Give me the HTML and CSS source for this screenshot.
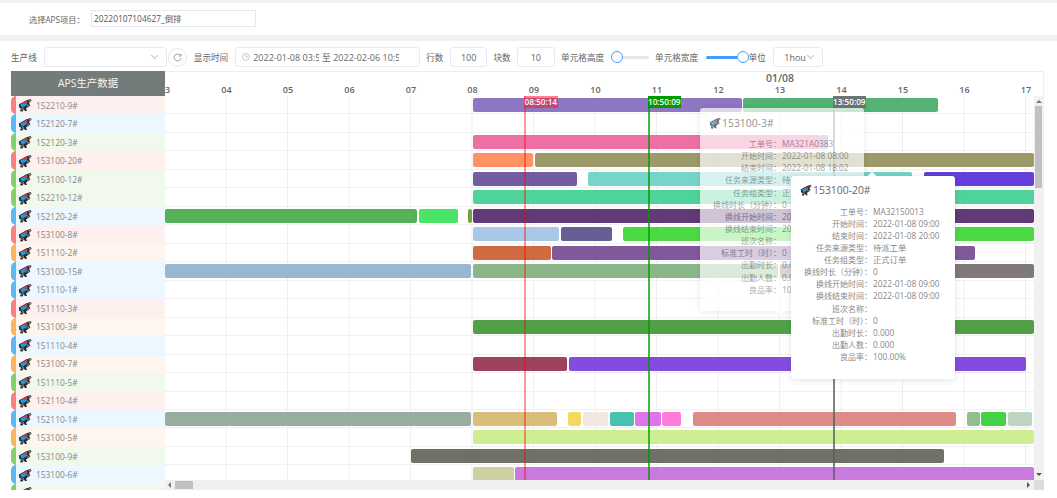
FILE: index.html
```html
<!DOCTYPE html>
<html lang="en">

<head>
  <meta charset="UTF-8">
  <meta name="viewport" content="width=device-width, initial-scale=1.0">
  <title>APS生产数据</title>
  <link rel="stylesheet" href="styles.css">
</head>

<body>

  <svg class="defs" width="0" height="0">
    <symbol id="machine" viewBox="0 0 14 14">
      <path d="M.8 6.4 8 2.4 12.6 1 13.6 2.4 11 5 12.4 7.4 8 10.6 9 13 7 13 5.6 11.2 4.6 13.6 2 13.2 3 10.6 1.4 10Z" fill="#2b2b2b" />
      <path d="M2.2 6.6 7.6 3.8 9.8 6.6 4 10Z" fill="#1f9ad6" />
      <path d="M5.4 4.6 8.6 2.8 10 4.4 7 6.2Z" fill="#d8344a" />
      <path d="M10.6 2.6 12.8 1.6 13 2.4 11.2 4Z" fill="#8a8a8a" />
      <path d="M3.2 11 5.4 10 5.8 10.8 3.6 12Z" fill="#9a9a9a" />
      <path d="M8.8 8 11.2 6.6 11.6 7.2 9.2 8.8Z" fill="#9a9a9a" />
    </symbol>
  </svg>

  <div class="project-bar">
    <span class="project-label">选择APS项目：</span>
    <div class="project-input">20220107104627_倒排</div>
  </div>

  <div class="toolbar">
    <span class="tb-label">生产线</span>
    <div class="field select-line"><span class="chev"></span></div>
    <div class="refresh">
      <svg width="9" height="9" viewBox="0 0 10 10">
        <path d="M8.3 3A3.8 3.8 0 1 0 8.8 5.6" fill="none" stroke="#888" stroke-width=".9" />
        <path d="M8.8 1V3.4H6.4" fill="none" stroke="#888" stroke-width=".9" />
      </svg>
    </div>
    <span class="tb-label time-label">显示时间</span>
    <div class="field date-range">
      <svg class="clock" width="8" height="8" viewBox="0 0 10 10">
        <circle cx="5" cy="5" r="4.3" fill="none" stroke="#b5b9c0" />
        <path d="M5 2.4V5.2H7.4" fill="none" stroke="#b5b9c0" />
      </svg>
      <span class="date-val">2022-01-08 03:50:14</span>
      <span class="date-sep">至</span>
      <span class="date-val">2022-02-06 10:50:09</span>
    </div>
    <span class="tb-label rows-label">行数</span>
    <div class="field num">100</div>
    <span class="tb-label blocks-label">块数</span>
    <div class="field num">10</div>
    <span class="tb-label height-label">单元格高度</span>
    <div class="slider slider-h"><span class="thumb"></span><span class="rail"></span></div>
    <span class="tb-label width-label">单元格宽度</span>
    <div class="slider slider-w"><span class="rail rail-on"></span><span class="thumb"></span></div>
    <span class="tb-label">单位</span>
    <div class="field select-unit"><span class="unit-val">1hou</span><span class="chev"></span></div>
  </div>

  <div class="gantt">
    <div class="side">
      <div class="side-head">APS生产数据</div>
      <div class="side-row red"><svg class="mi"><use href="#machine" /></svg>152210-9#</div>
      <div class="side-row blue"><svg class="mi"><use href="#machine" /></svg>152120-7#</div>
      <div class="side-row green"><svg class="mi"><use href="#machine" /></svg>152120-3#</div>
      <div class="side-row red"><svg class="mi"><use href="#machine" /></svg>153100-20#</div>
      <div class="side-row green"><svg class="mi"><use href="#machine" /></svg>153100-12#</div>
      <div class="side-row green"><svg class="mi"><use href="#machine" /></svg>152210-12#</div>
      <div class="side-row blue"><svg class="mi"><use href="#machine" /></svg>152120-2#</div>
      <div class="side-row red"><svg class="mi"><use href="#machine" /></svg>153100-8#</div>
      <div class="side-row orange"><svg class="mi"><use href="#machine" /></svg>151110-2#</div>
      <div class="side-row blue"><svg class="mi"><use href="#machine" /></svg>153100-15#</div>
      <div class="side-row blue"><svg class="mi"><use href="#machine" /></svg>151110-1#</div>
      <div class="side-row red"><svg class="mi"><use href="#machine" /></svg>151110-3#</div>
      <div class="side-row orange"><svg class="mi"><use href="#machine" /></svg>153100-3#</div>
      <div class="side-row blue"><svg class="mi"><use href="#machine" /></svg>151110-4#</div>
      <div class="side-row orange"><svg class="mi"><use href="#machine" /></svg>153100-7#</div>
      <div class="side-row green"><svg class="mi"><use href="#machine" /></svg>151110-5#</div>
      <div class="side-row red"><svg class="mi"><use href="#machine" /></svg>152110-4#</div>
      <div class="side-row blue"><svg class="mi"><use href="#machine" /></svg>152110-1#</div>
      <div class="side-row orange"><svg class="mi"><use href="#machine" /></svg>153100-5#</div>
      <div class="side-row green"><svg class="mi"><use href="#machine" /></svg>153100-9#</div>
      <div class="side-row blue"><svg class="mi"><use href="#machine" /></svg>153100-6#</div>
      <div class="side-row green"><svg class="mi"><use href="#machine" /></svg></div>
    </div>

    <div class="chart">
      <div class="chart-head">
        <div class="day">01/08</div>
        <div class="hours">
          <span>03</span><span>04</span><span>05</span><span>06</span><span>07</span><span>08</span><span>09</span><span>10</span><span>11</span><span>12</span><span>13</span><span>14</span><span>15</span><span>16</span><span>17</span>
        </div>
      </div>

      <div class="chart-mid">
        <div class="rows">
          <div class="row">
            <i class="bar" style="left:308px;width:269px;background:#8870c0"></i>
            <i class="bar" style="left:578px;width:195px;background:#4caf6e"></i>
          </div>
          <div class="row"></div>
          <div class="row">
            <i class="bar" style="left:308px;width:347px;background:#eb6a9f"></i>
            <i class="bar" style="left:655px;width:8px;background:#a88fc0"></i>
          </div>
          <div class="row">
            <i class="bar" style="left:308px;width:60px;background:#ff8c5f"></i>
            <i class="bar" style="left:370px;width:499px;background:#999563"></i>
          </div>
          <div class="row">
            <i class="bar" style="left:308px;width:104px;background:#6d569c"></i>
            <i class="bar" style="left:423px;width:324px;background:#70d2c6"></i>
            <i class="bar" style="left:759px;width:110px;background:#5e37d9"></i>
          </div>
          <div class="row">
            <i class="bar" style="left:308px;width:572px;background:#49d098"></i>
          </div>
          <div class="row">
            <i class="bar" style="left:0;width:252px;background:#4caf50"></i>
            <i class="bar" style="left:254px;width:39px;background:#42e35f"></i>
            <i class="bar" style="left:303px;width:4px;background:#6f9b3f"></i>
            <i class="bar" style="left:308px;width:561px;background:#5b3272"></i>
          </div>
          <div class="row">
            <i class="bar" style="left:308px;width:86px;background:#a6c6e6"></i>
            <i class="bar" style="left:396px;width:51px;background:#62578f"></i>
            <i class="bar" style="left:458px;width:411px;background:#44d93a"></i>
          </div>
          <div class="row">
            <i class="bar" style="left:308px;width:78px;background:#cc6539"></i>
            <i class="bar" style="left:387px;width:423px;background:#7b5297"></i>
          </div>
          <div class="row">
            <i class="bar" style="left:0;width:306px;background:#94b5cf"></i>
            <i class="bar" style="left:308px;width:305px;background:#86b384"></i>
            <i class="bar" style="left:615px;width:254px;background:#7a7572"></i>
          </div>
          <div class="row"></div>
          <div class="row"></div>
          <div class="row">
            <i class="bar" style="left:308px;width:561px;background:#4a9c40"></i>
          </div>
          <div class="row"></div>
          <div class="row">
            <i class="bar" style="left:308px;width:94px;background:#9b3a57"></i>
            <i class="bar" style="left:404px;width:457px;background:#7f45dd"></i>
          </div>
          <div class="row"></div>
          <div class="row"></div>
          <div class="row">
            <i class="bar" style="left:0;width:306px;background:#94a99b"></i>
            <i class="bar" style="left:308px;width:84px;background:#d9ba75"></i>
            <i class="bar" style="left:403px;width:13px;background:#f0d85a"></i>
            <i class="bar" style="left:418px;width:25px;background:#f3e6e0"></i>
            <i class="bar" style="left:445px;width:24px;background:#40bfae"></i>
            <i class="bar" style="left:470px;width:26px;background:#dd6ee8"></i>
            <i class="bar" style="left:497px;width:19px;background:#ff78d8"></i>
            <i class="bar" style="left:528px;width:263px;background:#dc8784"></i>
            <i class="bar" style="left:802px;width:13px;background:#8abd85"></i>
            <i class="bar" style="left:816px;width:25px;background:#39d13e"></i>
            <i class="bar" style="left:843px;width:24px;background:#bad3bb"></i>
          </div>
          <div class="row">
            <i class="bar" style="left:308px;width:561px;background:#cbee8d"></i>
          </div>
          <div class="row">
            <i class="bar" style="left:246px;width:533px;background:#686b5e"></i>
          </div>
          <div class="row">
            <i class="bar" style="left:308px;width:41px;background:#ccce9f"></i>
            <i class="bar" style="left:350px;width:519px;background:#c874e0"></i>
          </div>

          <div class="mark mark-red"><span>08:50:14</span></div>
          <div class="mark mark-green"><span>10:50:09</span></div>
          <div class="mark mark-gray"><span>13:50:09</span></div>
        </div>

        <div class="vbar">
          <span class="arrow-up"></span>
          <span class="vthumb"></span>
          <span class="arrow-down"></span>
        </div>
      </div>

      <div class="hbar">
        <span class="arrow-left"></span>
        <span class="hthumb"></span>
        <span class="arrow-right"></span>
        <span class="corner"></span>
      </div>
    </div>
  </div>

  <!-- tooltips of the two hovered bars -->
  <div class="tip tip-old">
    <div class="tip-title"><svg class="mi"><use href="#machine" /></svg>153100-3#</div>
    <dl>
      <dt>工单号：</dt><dd>MA321A0383</dd>
      <dt>开始时间：</dt><dd>2022-01-08 08:00</dd>
      <dt>结束时间：</dt><dd>2022-01-08 18:02</dd>
      <dt>任务来源类型：</dt><dd>待派工单</dd>
      <dt>任务组类型：</dt><dd>正式订单</dd>
      <dt>换线时长（分钟）：</dt><dd>0</dd>
      <dt>换线开始时间：</dt><dd>2022-01-08 08:00</dd>
      <dt>换线结束时间：</dt><dd>2022-01-08 08:00</dd>
      <dt>班次名称：</dt><dd></dd>
      <dt>标准工时（时）：</dt><dd>0</dd>
      <dt>出勤时长：</dt><dd>0.000</dd>
      <dt>出勤人数：</dt><dd>0.000</dd>
      <dt>良品率：</dt><dd>100.00%</dd>
    </dl>
  </div>

  <div class="tip tip-new">
    <div class="tip-title"><svg class="mi"><use href="#machine" /></svg>153100-20#</div>
    <dl>
      <dt>工单号：</dt><dd>MA32150013</dd>
      <dt>开始时间：</dt><dd>2022-01-08 09:00</dd>
      <dt>结束时间：</dt><dd>2022-01-08 20:00</dd>
      <dt>任务来源类型：</dt><dd>待派工单</dd>
      <dt>任务组类型：</dt><dd>正式订单</dd>
      <dt>换线时长（分钟）：</dt><dd>0</dd>
      <dt>换线开始时间：</dt><dd>2022-01-08 09:00</dd>
      <dt>换线结束时间：</dt><dd>2022-01-08 09:00</dd>
      <dt>班次名称：</dt><dd></dd>
      <dt>标准工时（时）：</dt><dd>0</dd>
      <dt>出勤时长：</dt><dd>0.000</dd>
      <dt>出勤人数：</dt><dd>0.000</dd>
      <dt>良品率：</dt><dd>100.00%</dd>
    </dl>
  </div>

</body>

</html>
```

FILE: styles.css
```css
html,
body {
  height: 498px;
  overflow: hidden;
}

body {
  margin: 0;
  position: relative;
  background-color: #fff;
  font-family: "Open Sans", "Noto Sans CJK SC", sans-serif;
  font-size: 8.6px;
  color: #666;
}

.defs {
  position: absolute;
}

/* top bar */

.project-bar {
  display: flex;
  align-items: center;
  box-sizing: border-box;
  height: 40.5px;
  padding-left: 29px;
  border-top: 3px solid #f0f2f5;
  border-bottom: 6.5px solid #f0f2f5;
}

.project-label {
  width: 62px;
  color: #666;
  font-size: 8.2px;
}

.project-input {
  box-sizing: border-box;
  width: 165px;
  height: 17px;
  padding-left: 2px;
  border: 1px solid #e4e7ed;
  color: #555;
  font-size: 8.4px;
  line-height: 15px;
}

/* toolbar */

.toolbar {
  display: flex;
  align-items: center;
  height: 20px;
  padding: 6.5px 0 4px 11px;
  white-space: nowrap;
}

.tb-label {
  color: #666;
}

.field {
  box-sizing: border-box;
  display: flex;
  align-items: center;
  height: 20px;
  border: 1px solid #e9ebf0;
  border-radius: 3px;
  color: #666;
  font-size: 9px;
}

.select-line {
  justify-content: flex-end;
  width: 123px;
  margin-left: 7.5px;
  padding-right: 9px;
}

.chev {
  width: 4px;
  height: 4px;
  margin-top: -3px;
  border-right: 1px solid #c0c4cc;
  border-bottom: 1px solid #c0c4cc;
  transform: rotate(45deg);
}

.refresh {
  box-sizing: border-box;
  display: flex;
  align-items: center;
  justify-content: center;
  width: 19px;
  height: 19px;
  margin-left: 1px;
  border: 1px solid #e4e7ed;
  border-radius: 50%;
}

.time-label {
  margin-left: 6.5px;
}

.date-range {
  width: 185px;
  margin-left: 7px;
  padding-left: 6px;
}

.clock {
  flex: none;
  margin-right: 3px;
}

.date-val {
  width: 66px;
  overflow: hidden;
}

.date-sep {
  width: 14px;
  text-align: center;
}

.rows-label {
  margin-left: 6px;
}

.num {
  justify-content: center;
  width: 37.5px;
  margin-left: 6.5px;
}

.blocks-label {
  margin-left: 6px;
}

.height-label {
  margin-left: 6.5px;
}

.slider {
  display: flex;
  align-items: center;
}

.slider-h {
  width: 38px;
  margin-left: 6.5px;
}

.slider-w {
  width: 43px;
  margin-left: 7.5px;
}

.width-label {
  margin-left: 6.5px;
}

.thumb {
  box-sizing: border-box;
  flex: none;
  width: 12px;
  height: 12px;
  border: 1.5px solid #409eff;
  border-radius: 50%;
  background: #fff;
}

.rail {
  flex: 1;
  height: 3px;
  background: #e4e7ed;
  border-radius: 0 2px 2px 0;
}

.rail-on {
  background: #409eff;
  border-radius: 2px 0 0 2px;
}

.select-unit {
  width: 49.5px;
  margin-left: 7.5px;
  padding-left: 10px;
}

.unit-val {
  width: 24px;
}

/* gantt */

.gantt {
  display: flex;
  height: 419px;
  margin-left: 11px;
}

.side {
  flex: none;
  width: 154px;
  overflow: hidden;
}

.side-head {
  height: 25px;
  background: #747b7b;
  color: #f4f4f4;
  font-size: 10.4px;
  line-height: 25px;
  text-align: center;
}

.side-row {
  box-sizing: border-box;
  display: flex;
  align-items: center;
  height: 18.48px;
  border-left: 5.5px solid;
  border-radius: 5px 0 0 5px;
  color: #888;
  font-size: 8.4px;
}

.red {
  border-left-color: #fb8080;
  background: #fff0f0;
}

.blue {
  border-left-color: #5fb9f0;
  background: #ecf7ff;
}

.green {
  border-left-color: #86cf6d;
  background: #f0f9eb;
}

.orange {
  border-left-color: #f9b55f;
  background: #fdf5ee;
}

.mi {
  flex: none;
  width: 14px;
  height: 14px;
  margin: 0 4px 0 2px;
}

.chart {
  flex: none;
  width: 879px;
  display: flex;
  flex-direction: column;
}

.chart-head {
  box-sizing: border-box;
  height: 25px;
  overflow: hidden;
  border-top: 1px solid #eee;
  border-right: 1px solid #eee;
}

.day {
  width: 40px;
  margin-left: 595px;
  color: #666;
  font-size: 10.5px;
  font-weight: 600;
  line-height: 12px;
  text-align: center;
}

.hours {
  display: flex;
  margin-left: -30.75px;
  color: #666;
  font-size: 9px;
  font-weight: 600;
  line-height: 11px;
}

.hours span {
  flex: 0 0 61.5px;
  text-align: center;
}

.chart-mid {
  display: flex;
  height: 383.5px;
}

.rows {
  position: relative;
  flex: none;
  width: 868.5px;
  overflow: hidden;
  background-image: linear-gradient(to right, transparent 61px, #eee 61px);
  background-size: 61.5px 100%;
}

.row {
  position: relative;
  box-sizing: border-box;
  height: 18.48px;
  border-bottom: 1px solid #f0f0f0;
}

.bar {
  position: absolute;
  top: 2px;
  height: 14px;
  border-radius: 2px;
  opacity: .96;
}

.mark {
  position: absolute;
  top: 0;
  bottom: 0;
  width: 2px;
}

.mark span {
  position: absolute;
  top: 0;
  left: 0;
  width: 33.5px;
  height: 11.5px;
  color: #fff;
  font-size: 8.2px;
  font-weight: 600;
  line-height: 11.5px;
  text-align: center;
}

.mark-red {
  left: 359px;
  background: rgba(255, 0, 0, .4);
}

.mark-red span {
  background: rgba(245, 30, 50, .55);
}

.mark-green {
  left: 482.5px;
  background: rgba(0, 153, 0, .72);
}

.mark-green span {
  background: #090;
}

.mark-gray {
  left: 667.5px;
  background: rgba(90, 100, 100, .8);
}

.mark-gray span {
  background: #6c7576;
}

/* scrollbars */

.vbar {
  flex: 1;
  display: flex;
  flex-direction: column;
  align-items: center;
  background: #f1f1f1;
}

.arrow-up {
  margin-top: 4px;
  border: 3px solid transparent;
  border-top: 0;
  border-bottom-color: #777;
}

.vthumb {
  width: 7px;
  height: 82px;
  margin-top: 3px;
  background: #c1c1c1;
}

.arrow-down {
  margin-top: auto;
  margin-bottom: 4px;
  border: 3px solid transparent;
  border-bottom: 0;
  border-top-color: #555;
}

.hbar {
  flex: 1;
  display: flex;
  align-items: center;
  background: #f0f0f0;
}

.arrow-left {
  margin-left: 3px;
  border: 3px solid transparent;
  border-left: 0;
  border-right-color: #777;
}

.hthumb {
  width: 18px;
  height: 8px;
  margin-left: 4px;
  background: #c1c1c1;
}

.arrow-right {
  margin-left: auto;
  margin-right: 4px;
  border: 3px solid transparent;
  border-right: 0;
  border-left-color: #555;
}

.corner {
  align-self: stretch;
  width: 10.5px;
  background: #dcdcdc;
}

/* tooltips */

.tip {
  position: absolute;
  box-sizing: border-box;
  width: 163.5px;
  height: 203px;
  padding: 7px 0 0 9px;
  border-radius: 3px;
  background: #fff;
  box-shadow: 0 1px 6px rgba(0, 0, 0, .12);
  color: #777;
}

.tip::before {
  content: "";
  position: absolute;
  width: 6px;
  height: 6px;
  background: #fff;
  transform: rotate(45deg);
}

.tip-old {
  top: 108px;
  left: 700px;
  opacity: .7;
}

.tip-old::before {
  bottom: -3px;
  left: 77px;
}

.tip-new {
  top: 175.5px;
  left: 791px;
}

.tip-new::before {
  top: -3px;
  left: 78px;
}

.tip-title {
  display: flex;
  align-items: center;
  height: 15px;
  margin-bottom: 8px;
  color: #666;
  font-size: 10.4px;
}

.tip-title .mi {
  width: 12px;
  height: 12px;
  margin: 0 1px 0 0;
}

.tip dl {
  display: grid;
  grid-template-columns: 72px 1fr;
  grid-auto-rows: 12.15px;
  margin: 0;
  font-size: 8.3px;
  line-height: 12.15px;
  white-space: nowrap;
}

.tip dt {
  justify-self: end;
  color: #888;
  font-size: 8px;
}

.tip dd {
  margin: 0 0 0 1px;
  color: #888;
}
```
